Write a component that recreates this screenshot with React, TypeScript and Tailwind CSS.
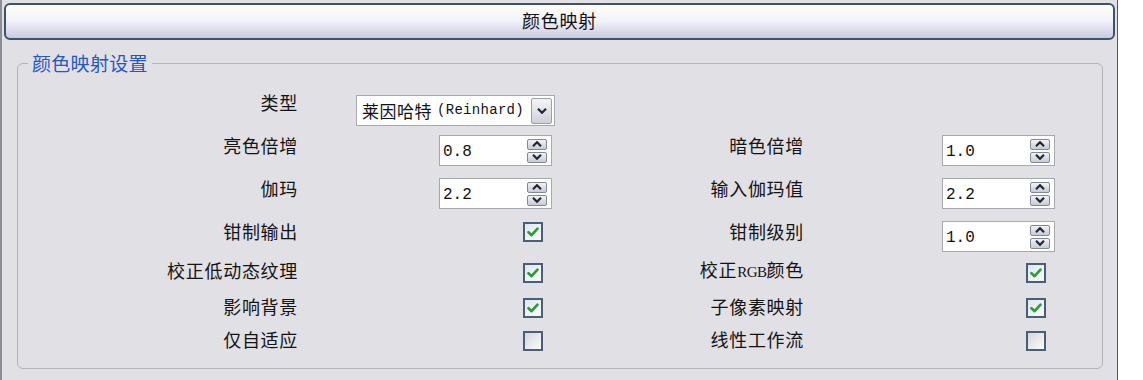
import React from "react";

const FONT = { fontFamily: '"Noto Sans CJK SC", "Noto Sans", sans-serif' };
const MONO = { fontFamily: '"Liberation Mono", "Noto Sans CJK SC", monospace' };

function Chevron({ up }: { up?: boolean }) {
  return (
    <svg width="10" height="6" viewBox="0 0 10 6">
      {up ? (
        <path d="M1 5.2 L5 1.2 L9 5.2" fill="none" stroke="#1e2a36" strokeWidth="2.2" />
      ) : (
        <path d="M1 0.8 L5 4.8 L9 0.8" fill="none" stroke="#1e2a36" strokeWidth="2.2" />
      )}
    </svg>
  );
}

function Spin({ value }: { value: string }) {
  return (
    <div className="mt-[12px] flex h-[31px] w-[113px] items-center justify-between border border-[#a7a9b0] bg-white pl-[3px] pr-[4px]">
      <span className="text-[16px] leading-none text-[#111] mt-[3px]" style={MONO}>
        {value}
      </span>
      <div className="flex flex-col gap-[2px]">
        <div className="flex h-[11px] w-[20px] items-center justify-center rounded-[2px] border border-[#7f8a98] bg-gradient-to-b from-[#f2f2f6] to-[#c9cad4]">
          <Chevron up />
        </div>
        <div className="flex h-[11px] w-[20px] items-center justify-center rounded-[2px] border border-[#7f8a98] bg-gradient-to-b from-[#f2f2f6] to-[#c9cad4]">
          <Chevron />
        </div>
      </div>
    </div>
  );
}

function Check({ checked, mt }: { checked: boolean; mt: string }) {
  return (
    <div
      className={`${mt} mr-[9px] flex h-[20px] w-[20px] items-center justify-center border-2 border-[#4a5f76] ${
        checked ? "bg-gradient-to-br from-[#dfe7ee] to-[#f8fbfc]" : "bg-gradient-to-br from-[#d6d6dc] to-[#fbfbfb]"
      }`}
    >
      {checked && (
        <svg width="12" height="10" viewBox="0 0 12 10">
          <path d="M1.5 5.2 L4.6 8.2 L10.5 1.6" fill="none" stroke="#2f9a36" strokeWidth="2.6" strokeLinecap="round" strokeLinejoin="round" />
        </svg>
      )}
    </div>
  );
}

function Label({ text }: { text: React.ReactNode }) {
  return (
    <div className="flex items-center justify-end text-[18px] leading-none tracking-[0.7px] text-[#141414]">
      {text}
    </div>
  );
}

const ROW = "grid grid-cols-[280px_254px_252px_251px] items-center";

export default function App() {
  return (
    <div className="flex h-[380px] w-[1143px] bg-white" style={FONT}>
      <div className="flex h-full w-[1118px] flex-col border-l-2 border-r border-l-[#8d8d97] border-r-[#55565f] bg-[#e1e0e5]">
        <div className="mx-[2px] mt-[3px] flex h-[37px] items-center justify-center rounded-[6px] border-2 border-[#3f5366] bg-gradient-to-b from-[#fffef6] via-[#f1f1fa] to-[#cacae0] pb-[2px] text-[18px] tracking-[0.7px] text-[#111]">
          颜色映射
        </div>
        <fieldset className="ml-[15px] mt-[13px] h-[316px] w-[1086px] rounded-[6px] border border-[#b3b3b8]">
          <legend className="ml-[10px] px-[4px] text-[19px] leading-[20px] tracking-[0.3px] text-[#2456c6]">
            颜色映射设置
          </legend>
          <div className="mt-[8px] flex flex-col">
            <div className={`${ROW} h-[42px]`}>
              <Label text="类型" />
              <div className="relative h-full">
                <div className="absolute left-[58px] top-[14px] flex h-[31px] w-[199px] items-center border border-[#a7a9b0] bg-white pl-[5px]">
                  <div className="flex h-full w-[169px] items-center whitespace-nowrap text-[17px] text-[#111]">
                    <span className="tracking-[0.5px]">莱因哈特</span>
                    <span style={MONO} className="ml-[5px] text-[14px] tracking-[0.3px]">(Reinhard)</span>
                  </div>
                  <div className="flex h-[26px] w-[21px] items-center justify-center rounded-[2px] border border-[#97a0ad] bg-gradient-to-b from-[#f4f4f8] to-[#cfd0da]">
                    <Chevron />
                  </div>
                </div>
              </div>
              <div />
              <div />
            </div>
            <div className={`${ROW} h-[43px]`}>
              <Label text="亮色倍增" />
              <div className="flex justify-end"><Spin value="0.8" /></div>
              <Label text="暗色倍增" />
              <div className="flex justify-end"><Spin value="1.0" /></div>
            </div>
            <div className={`${ROW} h-[43px]`}>
              <Label text="伽玛" />
              <div className="flex justify-end"><Spin value="2.2" /></div>
              <Label text="输入伽玛值" />
              <div className="flex justify-end"><Spin value="2.2" /></div>
            </div>
            <div className={`${ROW} h-[42px]`}>
              <Label text="钳制输出" />
              <div className="flex justify-end"><Check checked mt="mt-[2px]" /></div>
              <Label text="钳制级别" />
              <div className="flex justify-end"><Spin value="1.0" /></div>
            </div>
            <div className={`${ROW} h-[38px]`}>
              <Label text="校正低动态纹理" />
              <div className="flex justify-end"><Check checked mt="mt-[5px]" /></div>
              <Label text={<span>校正<span className="text-[15px] tracking-[-0.5px]" style={{ fontFamily: '"Liberation Serif", serif' }}>RGB</span>颜色</span>} />
              <div className="flex justify-end"><Check checked mt="mt-[5px]" /></div>
            </div>
            <div className={`${ROW} h-[33px]`}>
              <Label text="影响背景" />
              <div className="flex justify-end"><Check checked mt="mt-[4px]" /></div>
              <Label text="子像素映射" />
              <div className="flex justify-end"><Check checked mt="mt-[4px]" /></div>
            </div>
            <div className={`${ROW} h-[33px]`}>
              <Label text="仅自适应" />
              <div className="flex justify-end"><Check checked={false} mt="mt-[4px]" /></div>
              <Label text="线性工作流" />
              <div className="flex justify-end"><Check checked={false} mt="mt-[4px]" /></div>
            </div>
          </div>
        </fieldset>
      </div>
    </div>
  );
}
